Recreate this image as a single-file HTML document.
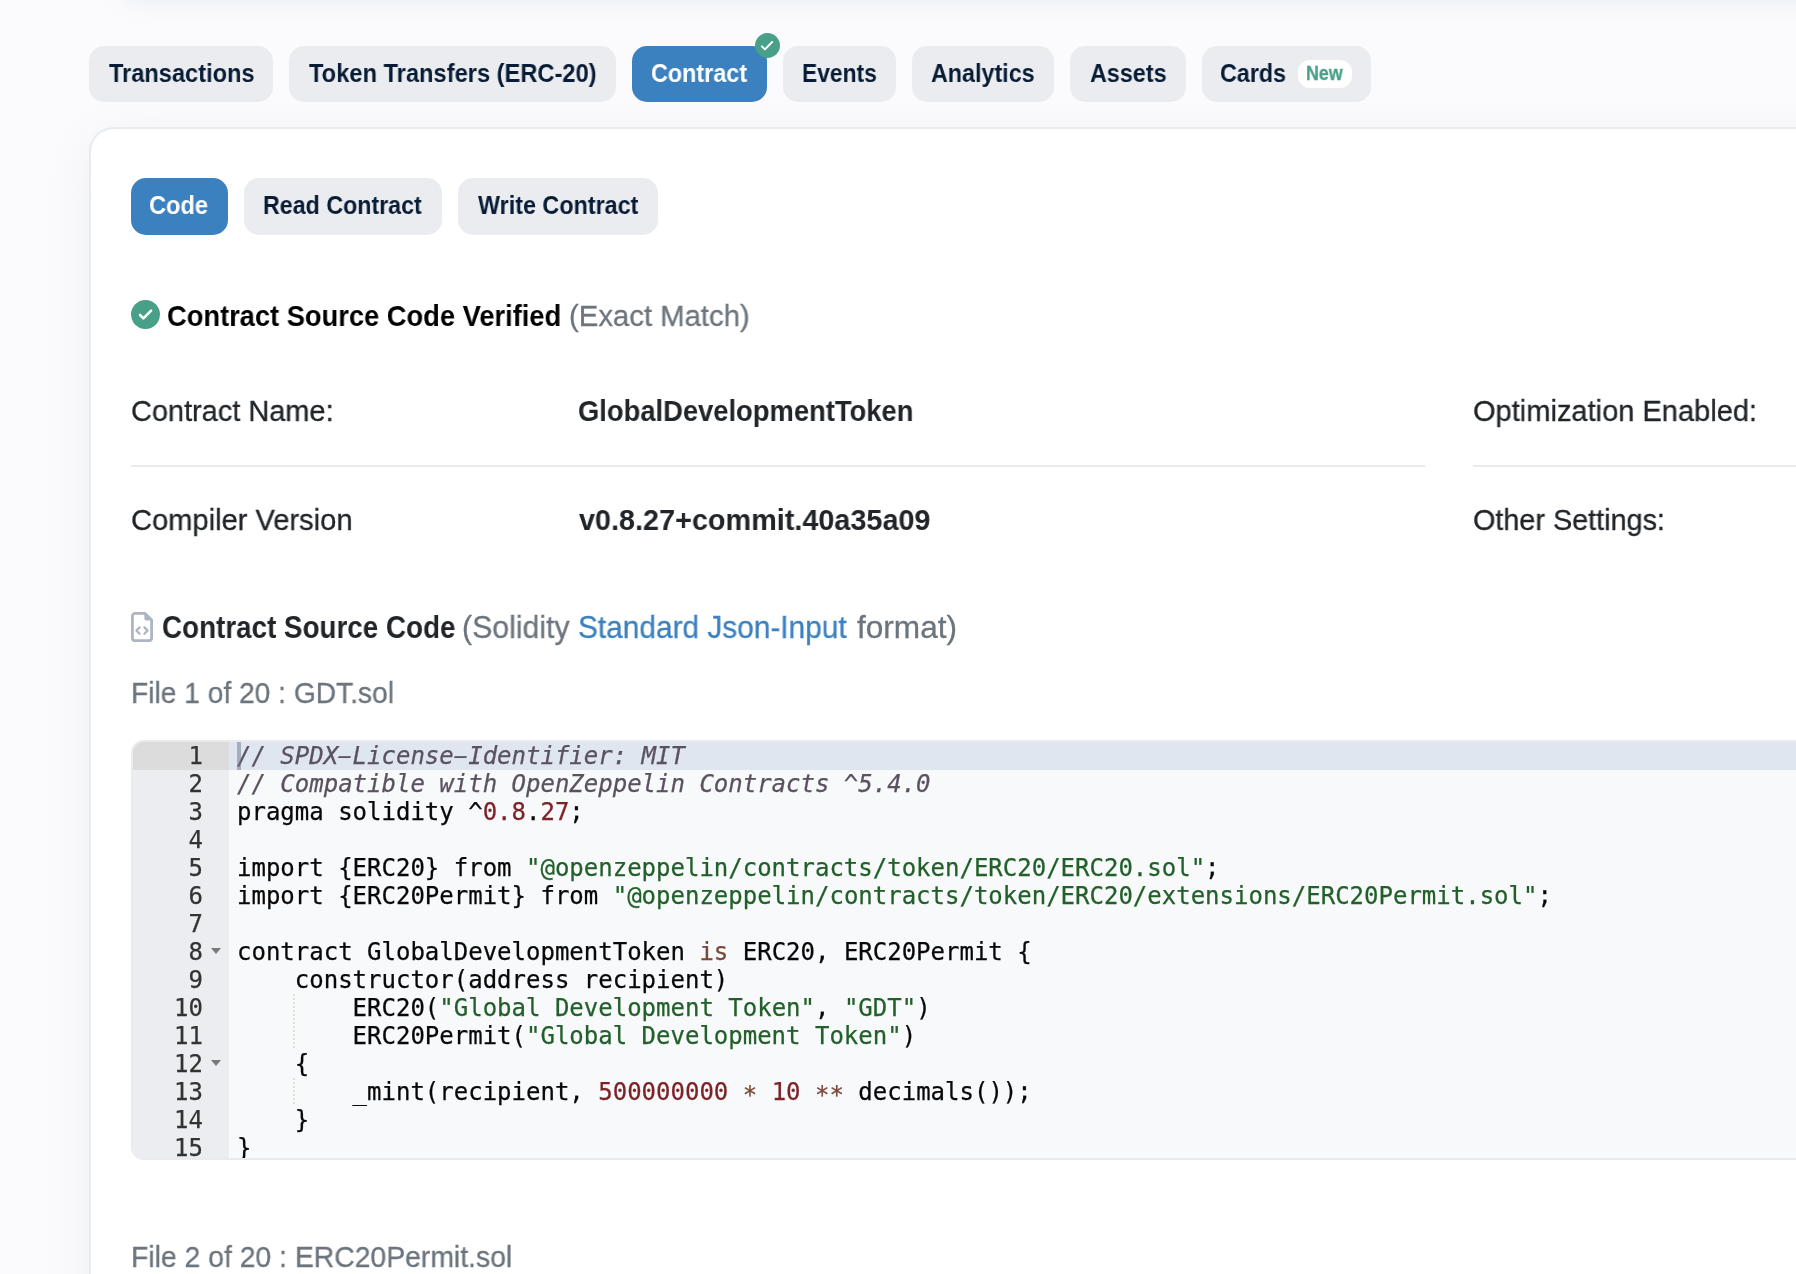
<!DOCTYPE html>
<html lang="en">
<head>
<meta charset="utf-8">
<title>Contract Source Code</title>
<style>
*{box-sizing:border-box;margin:0;padding:0}
html,body{width:1796px;height:1274px;overflow:hidden}
body{position:relative;background:#fbfbfd;font-family:"Liberation Sans",sans-serif;color:#212529}
.topshade{position:absolute;left:120px;top:-70px;width:1800px;height:60px;border-radius:24px;background:#fff;box-shadow:0 6px 28px rgba(170,178,205,.30)}
.t{position:absolute;white-space:nowrap;line-height:1;transform-origin:0 50%;will-change:transform}
.tab{position:absolute;top:46px;height:56px;border-radius:15px;background:#ebecf0;color:#081d35;font-weight:bold;font-size:25.4px}
.tab .t{top:15px;left:19px}
.tab.on,.sub.on{background:#3c81bf;color:#fff}
.card{position:absolute;left:89px;top:127px;width:1800px;height:1300px;background:#fff;border:2px solid #e8ebef;border-radius:25px;box-shadow:0 12px 48px rgba(189,197,215,.2)}
.sub{position:absolute;top:178px;height:57px;border-radius:15px;background:#ebecf0;color:#081d35;font-weight:bold;font-size:25.4px}
.sub .t{top:16px;left:19px}
.b{font-weight:bold}
.f28:not(.b),.f30:not(.b){-webkit-text-stroke:.3px}
.f28{font-size:29.4px}
.f30{font-size:30.5px}
.hr{position:absolute;height:2px;background:#e9ecef}
.muted{color:#6c757d}
.link{color:#3c81bf}
.badge{position:absolute;left:1298px;top:60px;width:54px;height:28px;border-radius:12px;background:#fff}
.badge .t{left:9px;top:5px;font-size:19.5px;font-weight:bold;color:#47a087;-webkit-text-stroke:.3px}
.dot{position:absolute;border-radius:50%;background:#47a087}
.dot svg{position:absolute;left:0;top:0;width:100%;height:100%}

.ed{position:absolute;left:131px;top:740px;width:1800px;height:420px;border:2px solid #e9ebef;border-radius:13px;background:#f8f9fb;overflow:hidden;font-family:"DejaVu Sans Mono","Liberation Mono",monospace;font-size:24px;line-height:28px;color:#080808;-webkit-text-stroke:0.25px}
.gut{position:absolute;left:0;top:0;width:96px;height:420px;background:#ecedf1;color:#333}
.gut div{height:28px;text-align:right;padding-right:26px;position:relative}
.gut .act{background:#dcdcdc}
.gut i{position:absolute;left:78px;top:10.4px;width:0;height:0;border-left:5.2px solid transparent;border-right:5.2px solid transparent;border-top:6.8px solid #7a7a7a}
.actl{position:absolute;left:96px;top:0;width:1700px;height:28px;background:#dfe6f0}
.cur{position:absolute;left:104px;top:0;width:4px;height:28px;background:rgba(110,116,135,.5)}
.code{position:absolute;left:104px;top:0;white-space:pre;font-family:inherit;font-size:inherit;line-height:inherit}
.cm{color:#5a525f;font-style:italic}
.st{color:#22602a}
.nu{color:#7d2226}
.kw{color:#794938}
.as{position:relative;top:3px}
.hy{display:inline-block;transform:scale(1.9,.85)}
.ig{position:absolute;left:160px;width:2px;background:repeating-linear-gradient(#e3dfd2 0 2px,transparent 2px 4px)}
/*FIT-START*/
#t1{left:19.9px;top:15px;transform:scaleX(0.9295)}
#t2{left:20.2px;top:15px;transform:scaleX(0.9321)}
#t3{left:18.5px;top:15px;transform:scaleX(0.9202)}
#t4{left:18.9px;top:15px;transform:scaleX(0.8976)}
#t5{left:19.4px;top:15px;transform:scaleX(0.9179)}
#t6{left:19.6px;top:15px;transform:scaleX(0.9193)}
#t7{left:18.4px;top:15px;transform:scaleX(0.9186)}
#t8{left:8.1px;top:4px;transform:scaleX(0.9125)}
#t9{left:18.4px;top:15px;transform:scaleX(0.9306)}
#t10{left:18.7px;top:15px;transform:scaleX(0.9150)}
#t11{left:19.6px;top:15px;transform:scaleX(0.9189)}
#t12{left:167.4px;top:301px;transform:scaleX(0.9282)}
#t13{left:568.6px;top:301px;transform:scaleX(0.9966)}
#t14{left:131.2px;top:396px;transform:scaleX(0.9842)}
#t15{left:577.7px;top:396px;transform:scaleX(0.9307)}
#t18{left:1473.0px;top:396px;transform:scaleX(0.9880)}
#t16{left:131.2px;top:505px;transform:scaleX(0.9900)}
#t17{left:578.6px;top:505px;transform:scaleX(0.9799)}
#t19{left:1473.0px;top:505px;transform:scaleX(0.9793)}
#t20{left:161.8px;top:612px;transform:scaleX(0.9114)}
#t21{left:462.2px;top:612px;transform:scaleX(0.9917)}
#t22{left:578.0px;top:612px;transform:scaleX(0.9781)}
#t23{left:856.6px;top:612px;transform:scaleX(1.0358)}
#t24{left:131.1px;top:678px;transform:scaleX(0.9583)}
#t25{left:131.1px;top:1242px;transform:scaleX(0.9643)}
/*FIT-END*/
</style>
</head>
<body>
<div class="topshade"></div>

<div class="tab" style="left:89px;width:184px"><span class="t" id="t1">Transactions</span></div>
<div class="tab" style="left:289px;width:327px"><span class="t" id="t2">Token Transfers (ERC-20)</span></div>
<div class="tab on" style="left:632px;width:135px"><span class="t" id="t3">Contract</span></div>
<div class="tab" style="left:783px;width:113px"><span class="t" id="t4">Events</span></div>
<div class="tab" style="left:912px;width:142px"><span class="t" id="t5">Analytics</span></div>
<div class="tab" style="left:1070px;width:116px"><span class="t" id="t6">Assets</span></div>
<div class="tab" style="left:1202px;width:169px"><span class="t" id="t7">Cards</span></div>
<div class="badge"><span class="t" id="t8">New</span></div>
<div class="dot" style="left:755px;top:33px;width:25px;height:25px"><svg viewBox="0 0 25 25"><path d="M6.9 13.35 L9.9 16.35 L17.2 9.05" fill="none" stroke="#fff" stroke-width="2" stroke-linecap="round" stroke-linejoin="round"/></svg></div>

<div class="card"></div>

<div class="sub on" style="left:131px;width:97px"><span class="t" id="t9">Code</span></div>
<div class="sub" style="left:244px;width:198px"><span class="t" id="t10">Read Contract</span></div>
<div class="sub" style="left:458px;width:200px"><span class="t" id="t11">Write Contract</span></div>

<div class="dot" style="left:131px;top:300.4px;width:29px;height:29px"><svg viewBox="0 0 29 29"><path d="M9 15 L12.4 18.4 L20.1 10.6" fill="none" stroke="#fff" stroke-width="2.6" stroke-linecap="round" stroke-linejoin="round"/></svg></div>
<span class="t f28 b" id="t12" style="color:#000">Contract Source Code Verified</span>
<span class="t f28 muted" id="t13">(Exact Match)</span>

<span class="t f28" id="t14">Contract Name:</span>
<span class="t f28 b" id="t15">GlobalDevelopmentToken</span>
<span class="t f28" id="t18">Optimization Enabled:</span>
<div class="hr" style="left:131px;top:465px;width:1294px"></div>
<div class="hr" style="left:1473px;top:465px;width:400px"></div>
<span class="t f28" id="t16">Compiler Version</span>
<span class="t f28 b" id="t17">v0.8.27+commit.40a35a09</span>
<span class="t f28" id="t19">Other Settings:</span>

<span class="t f30 b" id="t20">Contract Source Code</span>
<span class="t f30 muted" id="t21">(Solidity</span>
<span class="t f30 link" id="t22">Standard Json-Input</span>
<span class="t f30 muted" id="t23">format)</span>

<span class="t f28 muted" id="t24">File 1 of 20 : GDT.sol</span>
<span class="t f28 muted" id="t25">File 2 of 20 : ERC20Permit.sol</span>

<svg class="ficon" style="position:absolute;left:131px;top:612px;width:22px;height:30px" viewBox="0 0 22 30"><path d="M4 1.4h10l6.6 6.6v18a2.6 2.6 0 0 1-2.6 2.6H4A2.6 2.6 0 0 1 1.4 26V4A2.6 2.6 0 0 1 4 1.4z" fill="none" stroke="#adb5c2" stroke-width="2.8" stroke-linejoin="round"/><path d="M13.4 1.4l7.2 7.2h-5.4a1.8 1.8 0 0 1-1.8-1.8z" fill="#adb5c2"/><path d="M8.6 15.4L5.4 18.6l3.2 3.2M13.4 15.4l3.2 3.2-3.2 3.2" fill="none" stroke="#adb5c2" stroke-width="2.2" stroke-linecap="round" stroke-linejoin="round"/></svg>

<div class="ed">
<div class="actl"></div>
<div class="gut"><div class="act">1</div><div>2</div><div>3</div><div>4</div><div>5</div><div>6</div><div>7</div><div>8<i></i></div><div>9</div><div>10</div><div>11</div><div>12<i></i></div><div>13</div><div>14</div><div>15</div></div>
<div class="ig" style="top:252px;height:56px"></div>
<div class="ig" style="top:336px;height:28px"></div>
<pre class="code"><span class="cm">// SPDX<span class="hy">-</span>License<span class="hy">-</span>Identifier: MIT</span>
<span class="cm">// Compatible with OpenZeppelin Contracts ^5.4.0</span>
pragma solidity ^<span class="nu">0.8</span>.<span class="nu">27</span>;

import {ERC20} from <span class="st">"@openzeppelin/contracts/token/ERC20/ERC20.sol"</span>;
import {ERC20Permit} from <span class="st">"@openzeppelin/contracts/token/ERC20/extensions/ERC20Permit.sol"</span>;

contract GlobalDevelopmentToken <span class="kw">is</span> ERC20, ERC20Permit {
    constructor(address recipient)
        ERC20(<span class="st">"Global Development Token"</span>, <span class="st">"GDT"</span>)
        ERC20Permit(<span class="st">"Global Development Token"</span>)
    {
        _mint(recipient, <span class="nu">500000000</span> <span class="kw as">*</span> <span class="nu">10</span> <span class="kw as">**</span> decimals());
    }
}</pre>
<div class="cur"></div>
</div>

</body>
</html>
